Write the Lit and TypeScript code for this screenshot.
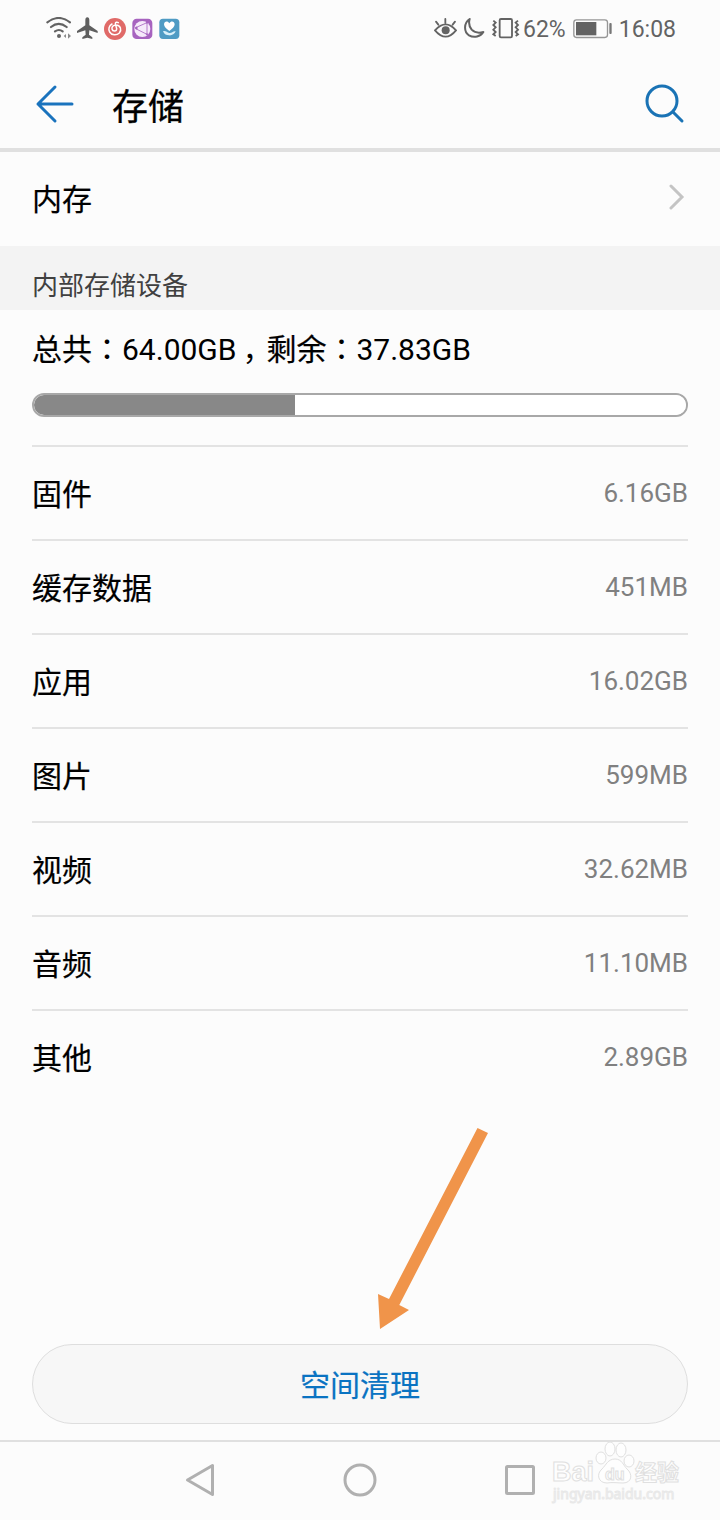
import { LitElement, html, css, svg } from "lit";
import { customElement } from "lit/decorators.js";

interface Usage {
  label: string;
  size: string;
}

const USAGE: Usage[] = [
  { label: "固件", size: "6.16GB" },
  { label: "缓存数据", size: "451MB" },
  { label: "应用", size: "16.02GB" },
  { label: "图片", size: "599MB" },
  { label: "视频", size: "32.62MB" },
  { label: "音频", size: "11.10MB" },
  { label: "其他", size: "2.89GB" },
];

const base = css`
  :host {
    display: block;
    box-sizing: border-box;
    font-family: Roboto, "Noto Sans CJK SC", sans-serif;
  }
  * {
    box-sizing: border-box;
  }
  svg {
    display: block;
    flex: none;
  }
  button {
    margin: 0;
    padding: 0;
    border: 0;
    background: none;
    font: inherit;
    color: inherit;
  }
`;

@customElement("status-bar")
class StatusBar extends LitElement {
  static styles = [
    base,
    css`
      .bar {
        display: flex;
        align-items: center;
        justify-content: space-between;
        height: 58px;
        padding: 0 44px 0 46px;
        color: #636363;
        font-size: 23px;
        line-height: 28px;
      }
      .group {
        display: flex;
        align-items: center;
      }
      .left {
        gap: 6px;
      }
      .right {
        gap: 7px;
      }
      .level {
        display: flex;
        align-items: center;
        gap: 3px;
      }
      .figure {
        padding-top: 2px;
      }
    `,
  ];

  render() {
    return html`
      <div class="bar">
        <div class="group left">
          <svg width="25" height="24" viewBox="18 27 75 72" fill="none" stroke="#636363" stroke-width="6.5" stroke-linecap="round">
            <path d="M22 43Q56 17 90 43M33 57Q56 38 80 57M45 70Q57 62 68 70" />
            <circle cx="57" cy="84" r="6" fill="#636363" stroke="none" />
            <path d="M78 78v12l-7-6zM84 76v16l9-8z" fill="#8a8a8a" stroke="none" />
          </svg>
          <svg width="21" height="24" viewBox="110 27 63 72" fill="#5f5f5f">
            <path d="M141 28c4 0 6 4 6 9v15l25 17v6l-25-8-1 13 10 8v5l-15-4-15 4v-5l10-8-1-13-25 8v-6l25-17V37c0-5 2-9 6-9z" />
          </svg>
          <svg width="22" height="24" viewBox="189 27 66 72" fill="none" stroke="#fff" stroke-width="4.5" stroke-linecap="round">
            <circle cx="222" cy="63" r="33" fill="#e06a68" stroke="none" />
            <path d="M213 48c-9 5-12 16-7 24 6 10 21 11 29 3 8-9 4-23-10-24-9 0-13 6-12 12 2 8 14 8 14-1l-4-14c0-6 5-6 9-4" />
          </svg>
          <svg width="21" height="24" viewBox="275 27 63 72" fill="none" stroke="#a763bf" stroke-width="2.5">
            <rect x="276" y="32" width="60" height="61" rx="13" fill="#a763bf" stroke="none" />
            <circle cx="306" cy="63" r="24" fill="#f6eafa" stroke="none" />
            <path d="M286 59 322 43M286 62 322 80M320 43v37" />
            <circle cx="288" cy="60" r="3" fill="#a763bf" />
            <circle cx="320" cy="44" r="2" fill="#a763bf" />
            <circle cx="320" cy="79" r="2" fill="#a763bf" />
          </svg>
          <svg width="21" height="24" viewBox="359 27 63 72">
            <rect x="360" y="32" width="60" height="61" rx="11" fill="#4f9bc4" />
            <path d="M390 69c-9-7-16-12-16-20 0-9 11-12 16-3 5-9 16-6 16 3 0 8-7 13-16 20z" fill="#fff" />
            <path d="M371 70c8-3 12 4 19 5 8 1 11-7 19-5-3 8-12 13-20 12-8 0-14-3-18-12z" fill="#d9f0fa" />
          </svg>
        </div>
        <div class="group right">
          <svg width="23" height="24" viewBox="29 27 69 72" fill="none" stroke="#636363" stroke-width="5.5" stroke-linecap="round">
            <path d="M32 67Q64 31 95 67Q64 105 32 67z" />
            <circle cx="64" cy="67" r="12" fill="#636363" stroke="none" />
            <path d="M63 33v12M35 41l7 9M92 41l-7 9" />
          </svg>
          <svg width="21" height="24" viewBox="119 27 63 72" fill="none" stroke="#636363" stroke-width="6" stroke-linejoin="round">
            <path d="M136 33C118 45 118 71 134 82c15 9 35 4 43-10-14 4-26 2-35-7-7-9-10-19-6-32z" />
          </svg>
          <div class="level">
            <svg width="28" height="24" viewBox="202 27 84 72" fill="none" stroke="#636363" stroke-width="5.5">
              <rect x="225" y="33" width="37" height="55" rx="4" />
              <path d="M206 38l7 6-7 7 7 7-7 7 7 7-7 7 7 5M280 38l-7 6 7 7-7 7 7 7-7 7 7 7-7 5" />
            </svg>
            <span class="figure">62%</span>
          </div>
          <svg width="39" height="24" viewBox="441 27 117 72">
            <rect x="443.500" y="35.500" width="101" height="53" rx="8" fill="none" stroke="#969696" stroke-width="4" />
            <rect x="450" y="42" width="61" height="40" fill="#636363" />
            <rect x="550" y="45" width="7" height="33" rx="3" fill="#777" />
          </svg>
          <time class="figure">16:08</time>
        </div>
      </div>
    `;
  }
}

@customElement("storage-list")
class StorageList extends LitElement {
  static styles = [
    base,
    css`
      .list {
        margin: 0;
        padding: 0;
        border-top: 2px solid #e3e3e3;
      }
      .row {
        display: flex;
        align-items: center;
        justify-content: space-between;
        height: 94px;
        border-bottom: 2px solid #e3e3e3;
      }
      .row:last-child {
        border-bottom-color: transparent;
      }
      .label {
        padding-top: 4px;
        font-size: 30px;
        line-height: 44px;
        color: #000;
        -webkit-text-stroke: 0.2px #000;
      }
      .size {
        margin: 0;
        font-size: 26px;
        line-height: 36px;
        color: #808080;
      }
    `,
  ];

  render() {
    return html`
      <dl class="list">
        ${USAGE.map(
          (u) => html`
            <div class="row">
              <dt class="label">${u.label}</dt>
              <dd class="size">${u.size}</dd>
            </div>
          `,
        )}
      </dl>
    `;
  }
}

const paw = svg`
  <ellipse cx="601" cy="1458" rx="5" ry="6" />
  <ellipse cx="610" cy="1449" rx="5" ry="7" />
  <ellipse cx="621" cy="1450" rx="5" ry="7" />
  <ellipse cx="629" cy="1461" rx="5" ry="6" />
  <path d="M615 1459c7 0 8 6 12 10 6 5 5 14-4 14-5 0-11-1-16 0-9 0-11-9-5-14 4-4 6-10 13-10z" />
`;

@customElement("app-root")
class AppRoot extends LitElement {
  static styles = [
    base,
    css`
      :host {
        display: flex;
        flex-direction: column;
        min-height: 100vh;
        background: #fcfcfc;
        color: #000;
      }
      .header {
        display: flex;
        align-items: center;
        height: 94px;
        padding: 2px 32px 0;
        border-bottom: 4px solid #e0e0e0;
      }
      .title {
        flex: 1;
        margin: 0 0 0 36px;
        padding-top: 8px;
        font-size: 36px;
        font-weight: 400;
        line-height: 52px;
        -webkit-text-stroke: 0.3px #000;
      }
      .memory {
        display: flex;
        align-items: center;
        justify-content: space-between;
        height: 94px;
        padding: 0 32px 2px;
        color: #000;
        font-size: 30px;
        line-height: 44px;
        text-decoration: none;
      }
      .name {
        padding-top: 4px;
        -webkit-text-stroke: 0.2px #000;
      }
      .section {
        height: 64px;
        margin: 0;
        padding: 16px 32px 0;
        background: #f3f3f3;
        color: #404040;
        font-size: 26px;
        font-weight: 400;
        line-height: 48px;
      }
      .content {
        padding: 0 32px;
      }
      .total {
        margin: 0;
        padding: 18px 0 21px;
        font-size: 30px;
        line-height: 44px;
      }
      .cjk {
        -webkit-text-stroke: 0.2px #000;
      }
      .mark {
        font-family: "Noto Sans CJK TC", sans-serif;
        line-height: 1;
      }
      .comma {
        margin-right: -6px;
        padding-left: 6px;
      }
      .usage {
        display: block;
        width: 100%;
        height: 24px;
        margin-bottom: 28px;
        border: 2px solid #a8a8a8;
        border-radius: 12px;
        overflow: hidden;
        appearance: none;
        background: #fff;
      }
      .usage::-webkit-progress-bar {
        background: #fff;
      }
      .usage::-webkit-progress-value {
        background: #888;
      }
      .action {
        position: relative;
        margin-top: auto;
        padding: 16px 32px;
      }
      .clean {
        display: block;
        width: 100%;
        height: 80px;
        padding-top: 4px;
        border: 1px solid #dedede;
        border-radius: 40px;
        background: #f7f7f7;
        color: #0a73c2;
        font-size: 30px;
        line-height: 44px;
        -webkit-text-stroke: 0.2px #0a73c2;
      }
      .pointer {
        position: absolute;
        left: 52%;
        bottom: 110px;
        pointer-events: none;
      }
      .nav {
        position: relative;
        display: flex;
        justify-content: center;
        align-items: center;
        gap: 120px;
        height: 80px;
        padding-bottom: 2px;
        border-top: 2px solid #e0e0e0;
      }
      .watermark {
        position: absolute;
        right: 38px;
        bottom: 14px;
        pointer-events: none;
      }
    `,
  ];

  render() {
    return html`
      <status-bar></status-bar>
      <header class="header">
        <button aria-label="返回">
          <svg width="44" height="44" viewBox="0 0 44 44" fill="none" stroke="#1a73bd" stroke-width="3" stroke-linecap="round" stroke-linejoin="round">
            <path d="M23 5 6 22l17 17M6 22h34" />
          </svg>
        </button>
        <h1 class="title">存储</h1>
        <button aria-label="搜索">
          <svg width="44" height="44" viewBox="0 0 44 44" fill="none" stroke="#1a73b5" stroke-width="3" stroke-linecap="round">
            <circle cx="18" cy="19" r="15" />
            <path d="m29 30 9 9" />
          </svg>
        </button>
      </header>
      <a class="memory" href="#memory">
        <span class="name">内存</span>
        <svg width="20" height="28" viewBox="0 0 20 28" fill="none" stroke="#c4c4c4" stroke-width="3" stroke-linecap="round">
          <path d="M3 2 14 13 3 24" />
        </svg>
      </a>
      <h2 class="section">内部存储设备</h2>
      <main class="content">
        <p class="total"><span class="cjk">总共</span><span class="mark">：</span>64.00GB<span class="comma">，</span><span class="cjk">剩余</span><span class="mark">：</span>37.83GB</p>
        <progress class="usage" max="100" value="40" aria-label="已用空间"></progress>
        <storage-list></storage-list>
      </main>
      <div class="action">
        <button class="clean">空间清理</button>
        <svg class="pointer" width="116" height="204" viewBox="374 1126 116 204" aria-hidden="true">
          <path d="M477.500 1128 488 1133 399.300 1305 409 1310 380 1329 378 1294 389 1299z" fill="#f0944a" />
        </svg>
      </div>
      <nav class="nav">
        <button aria-label="后退">
          <svg width="40" height="40" viewBox="0 0 40 40" fill="none" stroke="#b0b0b0" stroke-width="3" stroke-linejoin="round">
            <path d="M7.500 20 32.500 5.500v29z" />
          </svg>
        </button>
        <button aria-label="主页">
          <svg width="40" height="40" viewBox="0 0 40 40" fill="none" stroke="#b0b0b0" stroke-width="3">
            <circle cx="20" cy="20" r="15" />
          </svg>
        </button>
        <button aria-label="最近任务">
          <svg width="40" height="40" viewBox="0 0 40 40" fill="none" stroke="#b0b0b0" stroke-width="3">
            <rect x="6.500" y="6.500" width="27" height="27" rx="1" />
          </svg>
        </button>
        <svg class="watermark" width="132" height="68" viewBox="550 1438 132 68" fill="#fefefe" stroke="#e0e0e0" stroke-width="1">
          <g font-family="Liberation Sans, Noto Sans CJK SC, sans-serif" font-weight="700">
            <text x="552" y="1481" font-size="27">Bai</text>
            ${paw}
            <text x="605" y="1480" font-size="16">du</text>
            <text x="635" y="1480" font-size="22" font-family="Noto Sans CJK SC, sans-serif">经验</text>
            <text x="553" y="1499" font-size="14" font-weight="400" stroke="#e8e8e8" font-family="Noto Sans, sans-serif">jingyan.baidu.com</text>
          </g>
        </svg>
      </nav>
    `;
  }
}
